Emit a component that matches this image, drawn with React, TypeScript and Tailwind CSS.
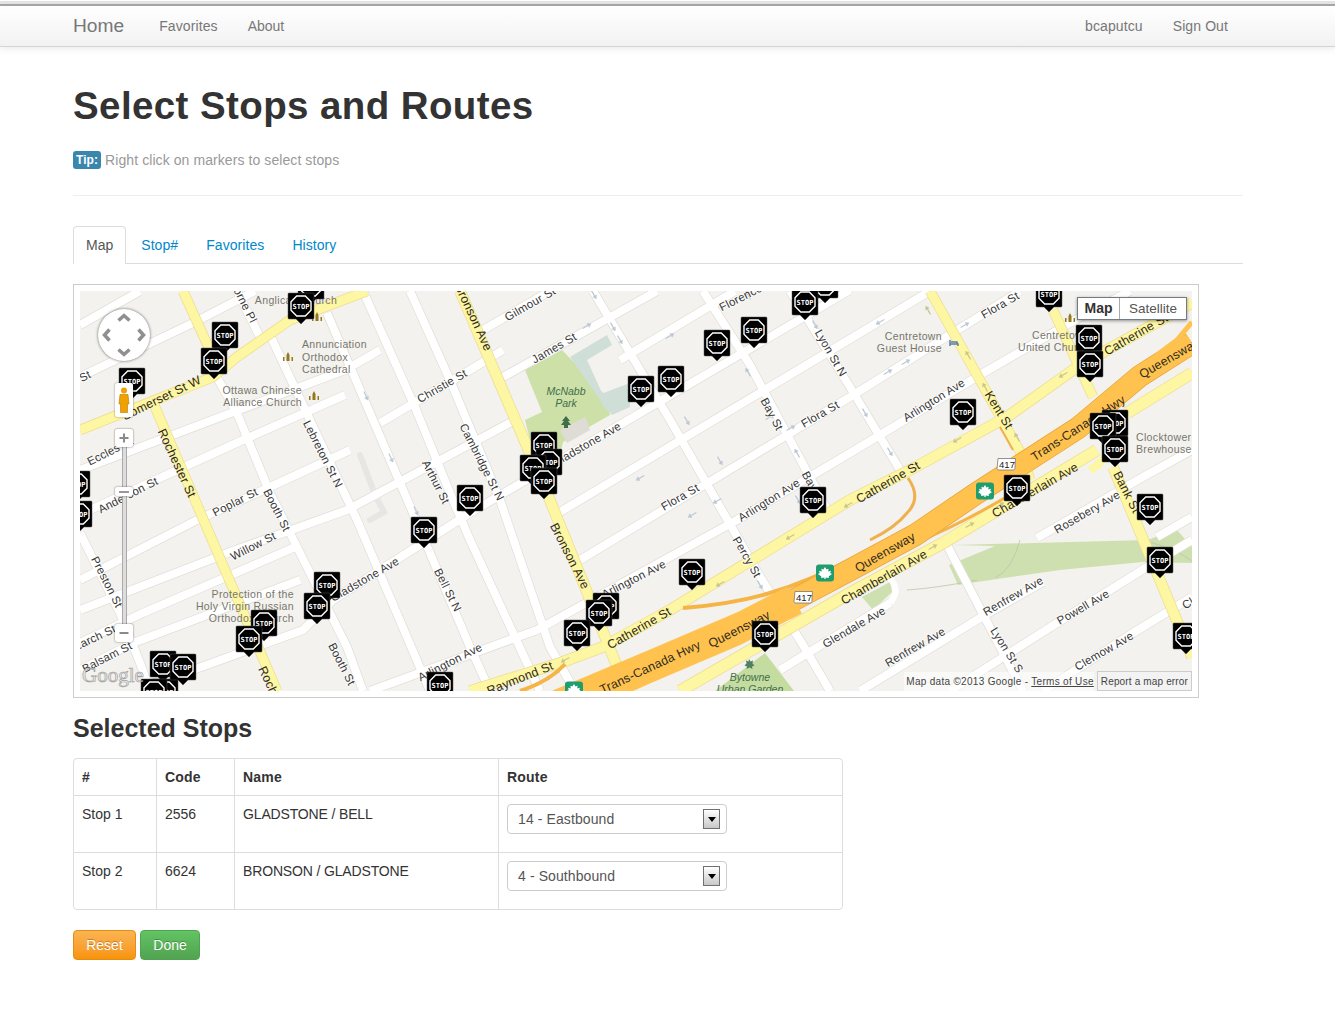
type Pt = [number, number];
type Label = { t: string; x: number; y: number; a?: number; anchor?: "start" | "middle" | "end"; main?: boolean };

const whiteRoads: Pt[][] = [
  // north-east running streets
  [[80, 325], [140, 291]],
  [[80, 377], [195, 322], [255, 291]],
  [[80, 470], [345, 370], [380, 350]],
  [[90, 510], [243, 440], [345, 395]],
  [[380, 423], [470, 370], [503, 350]],
  [[483, 330], [550, 291]],
  [[503, 377], [657, 291]],
  [[620, 360], [735, 291]],
  [[333, 600], [470, 513], [560, 460], [850, 290]],
  [[193, 670], [303, 630], [333, 600]],
  [[560, 512], [850, 339], [930, 291]],
  [[580, 560], [850, 397], [1020, 291]],
  [[370, 691], [537, 630], [737, 520], [850, 453], [985, 372], [1075, 320], [1130, 291]],
  [[80, 580], [197, 520], [257, 493], [350, 450]],
  [[80, 610], [230, 552], [347, 510], [515, 420]],
  [[80, 643], [143, 613], [300, 545]],
  [[80, 670], [133, 643], [300, 580]],
  [[1037, 538], [1143, 477], [1192, 450]],
  [[1157, 537], [1192, 517]],
  [[780, 670], [890, 603]],
  [[860, 691], [985, 615], [1043, 582]],
  [[950, 691], [1057, 623], [1147, 567], [1192, 540]],
  [[1043, 691], [1133, 633], [1192, 597]],
  // south-east running streets
  [[237, 291], [260, 337]],
  [[270, 335], [357, 520], [430, 691]],
  [[210, 365], [237, 413], [270, 493], [310, 573], [347, 647], [363, 691]],
  [[80, 533], [120, 613], [140, 663], [150, 691]],
  [[327, 313], [413, 513], [470, 647], [490, 691]],
  [[363, 291], [415, 407], [450, 493], [470, 540], [540, 691]],
  [[410, 291], [450, 380], [500, 500], [550, 647], [575, 691]],
  [[593, 291], [670, 420], [762, 580], [800, 640], [830, 691]],
  [[703, 291], [750, 365], [797, 453], [830, 515]],
  [[790, 291], [850, 387], [900, 470]],
  [[947, 545], [1023, 691]],
];

const yellowRoads: { pts: Pt[]; w: number }[] = [
  { pts: [[80, 430], [213, 377], [237, 357], [290, 320], [367, 291]], w: 9 },
  { pts: [[183, 291], [213, 357]], w: 9 },
  { pts: [[152, 400], [277, 691]], w: 9 },
  { pts: [[460, 291], [547, 493], [627, 691]], w: 10 },
  { pts: [[470, 691], [560, 663], [603, 647], [670, 610], [850, 500], [910, 470], [1007, 417], [1073, 370], [1107, 350], [1192, 303]], w: 10 },
  { pts: [[680, 691], [850, 593], [943, 543], [1097, 450]], w: 11 },
  { pts: [[1127, 413], [1192, 373]], w: 11 },
  { pts: [[930, 291], [1023, 457], [1030, 480]], w: 9 },
  { pts: [[1053, 310], [1093, 397]], w: 9 },
  { pts: [[1113, 467], [1192, 657]], w: 10 },
];

const highway = "575,702 650,667 739,629 850,570 915,535 977,493 1078,428 1140,376 1192,343";

const labels: Label[] = [
  { t: "Somerset St W", x: 200, y: 379, a: -26, anchor: "end", main: true },
  { t: "Rochester St", x: 177, y: 463, a: 65, main: true },
  { t: "Rochester St", x: 262, y: 667, a: 65, anchor: "start", main: true },
  { t: "Lorne Pl", x: 254, y: 322, a: 63, anchor: "end" },
  { t: "Lebreton St N", x: 323, y: 454, a: 63 },
  { t: "Christie St", x: 442, y: 386, a: -30 },
  { t: "Arthur St", x: 436, y: 482, a: 63 },
  { t: "Cambridge St N", x: 482, y: 462, a: 63 },
  { t: "Eccles St", x: 110, y: 451, a: -27 },
  { t: "Anderson St", x: 128, y: 495, a: -27 },
  { t: "Poplar St", x: 235, y: 502, a: -27 },
  { t: "Booth St", x: 277, y: 510, a: 63 },
  { t: "Willow St", x: 253, y: 546, a: -27 },
  { t: "Preston St", x: 107, y: 582, a: 63 },
  { t: "Gladstone Ave", x: 398, y: 560, a: -30, anchor: "end" },
  { t: "Bell St N", x: 448, y: 590, a: 63 },
  { t: "Larch St", x: 115, y: 628, a: -25, anchor: "end" },
  { t: "Balsam St", x: 107, y: 657, a: -27 },
  { t: "Booth St", x: 342, y: 664, a: 63 },
  { t: "Arlington Ave", x: 450, y: 662, a: -27 },
  { t: "St", x: 85, y: 376, a: -27 },
  { t: "Gilmour St", x: 530, y: 304, a: -30 },
  { t: "Bronson Ave", x: 489, y: 350, a: 65, anchor: "end", main: true },
  { t: "James St", x: 554, y: 348, a: -30 },
  { t: "Gladstone Ave", x: 620, y: 425, a: -30, anchor: "end" },
  { t: "Florence St", x: 720, y: 308, a: -27, anchor: "start" },
  { t: "Lyon St N", x: 831, y: 353, a: 60 },
  { t: "Bay St", x: 772, y: 414, a: 62 },
  { t: "Flora St", x: 820, y: 414, a: -30 },
  { t: "Flora St", x: 680, y: 497, a: -30 },
  { t: "Arlington Ave", x: 769, y: 500, a: -32 },
  { t: "Bay St", x: 805, y: 472, a: 62, anchor: "start" },
  { t: "Percy St", x: 747, y: 557, a: 60 },
  { t: "Bronson Ave", x: 570, y: 556, a: 63, main: true },
  { t: "Arlington Ave", x: 665, y: 563, a: -27, anchor: "end" },
  { t: "Catherine St", x: 639, y: 628, a: -30, main: true },
  { t: "Raymond St", x: 520, y: 678, a: -22, main: true },
  { t: "Trans-Canada Hwy", x: 650, y: 667, a: -25, main: true },
  { t: "Queensway", x: 739, y: 629, a: -27, main: true },
  { t: "Glendale Ave", x: 854, y: 627, a: -30 },
  { t: "Flora St", x: 1000, y: 305, a: -30 },
  { t: "Catherine St", x: 1105, y: 352, a: -30, anchor: "start", main: true },
  { t: "Queensway", x: 1140, y: 375, a: -30, anchor: "start", main: true },
  { t: "Arlington Ave", x: 934, y: 400, a: -32 },
  { t: "Kent St", x: 999, y: 410, a: 58, main: true },
  { t: "Trans-Canada Hwy", x: 1078, y: 428, a: -33, main: true },
  { t: "Chamberlain Ave", x: 1035, y: 490, a: -30, main: true },
  { t: "Catherine St", x: 888, y: 482, a: -30, main: true },
  { t: "Queensway", x: 885, y: 552, a: -30, main: true },
  { t: "Chamberlain Ave", x: 884, y: 577, a: -30, main: true },
  { t: "Rosebery Ave", x: 1087, y: 512, a: -30 },
  { t: "Bank St", x: 1127, y: 492, a: 63, main: true },
  { t: "Renfrew Ave", x: 1013, y: 596, a: -30 },
  { t: "Powell Ave", x: 1083, y: 607, a: -30 },
  { t: "Renfrew Ave", x: 915, y: 647, a: -30 },
  { t: "Lyon St S", x: 1007, y: 650, a: 58 },
  { t: "Clemow Ave", x: 1104, y: 651, a: -30 },
  { t: "Clemow Ave", x: 1183, y: 606, a: -30, anchor: "start" },
];

const pois: { t: string; x: number; y: number; anchor: "start" | "middle" | "end" }[] = [
  { t: "Anglican Church", x: 296, y: 304, anchor: "middle" },
  { t: "Annunciation", x: 302, y: 348, anchor: "start" },
  { t: "Orthodox", x: 302, y: 361, anchor: "start" },
  { t: "Cathedral", x: 302, y: 373, anchor: "start" },
  { t: "Ottawa Chinese", x: 302, y: 394, anchor: "end" },
  { t: "Alliance Church", x: 302, y: 406, anchor: "end" },
  { t: "Protection of the", x: 294, y: 598, anchor: "end" },
  { t: "Holy Virgin Russian", x: 294, y: 610, anchor: "end" },
  { t: "Orthodox Church", x: 294, y: 622, anchor: "end" },
  { t: "Centretown", x: 942, y: 340, anchor: "end" },
  { t: "Guest House", x: 942, y: 352, anchor: "end" },
  { t: "Centretown", x: 1032, y: 339, anchor: "start" },
  { t: "United Church", x: 1018, y: 351, anchor: "start" },
  { t: "Clocktower", x: 1136, y: 441, anchor: "start" },
  { t: "Brewhouse", x: 1136, y: 453, anchor: "start" },
];

const stops: Pt[] = [
  [311, 286], [301, 306], [225, 335], [214, 361], [132, 381], [77, 484], [79, 514],
  [327, 585], [317, 606], [264, 623], [249, 639], [165, 692], [163, 664], [183, 667], [154, 692],
  [424, 530], [470, 498], [440, 685], [544, 445], [549, 462], [533, 468], [544, 481],
  [641, 389], [671, 379], [717, 343], [754, 330], [825, 285], [805, 302], [692, 572], [813, 500],
  [606, 606], [599, 613], [577, 633], [765, 634], [963, 412], [1017, 488], [1049, 294], [1089, 338],
  [1090, 364], [1115, 423], [1103, 426], [1115, 449], [1150, 507], [1160, 560], [1186, 636],
];

const arrows: { x: number; y: number; a: number; c?: string }[] = [
  { x: 366, y: 396, a: 65 }, { x: 391, y: 458, a: 65 }, { x: 416, y: 511, a: 65 },
  { x: 594, y: 295, a: 60 }, { x: 613, y: 327, a: 60 }, { x: 620, y: 340, a: 60 },
  { x: 587, y: 326, a: -30 }, { x: 670, y: 336, a: -30 }, { x: 687, y: 421, a: 60 },
  { x: 720, y: 461, a: 60 }, { x: 692, y: 515, a: 150 }, { x: 717, y: 501, a: 150 },
  { x: 640, y: 478, a: 150 }, { x: 770, y: 417, a: -30 }, { x: 791, y: 428, a: -30 },
  { x: 748, y: 295, a: 240 }, { x: 748, y: 372, a: 240 }, { x: 797, y: 453, a: 240 },
  { x: 798, y: 500, a: 60 }, { x: 760, y: 585, a: 60 }, { x: 880, y: 322, a: 150 },
  { x: 888, y: 372, a: -30 }, { x: 906, y: 362, a: -30 }, { x: 965, y: 325, a: -30 },
  { x: 815, y: 325, a: 60 }, { x: 865, y: 413, a: 60 }, { x: 890, y: 452, a: 60 },
  { x: 928, y: 310, a: 240, c: "#c9c68f" }, { x: 968, y: 355, a: 240, c: "#c9c68f" },
  { x: 985, y: 387, a: 240, c: "#c9c68f" }, { x: 1017, y: 437, a: 240, c: "#c9c68f" },
  { x: 957, y: 440, a: 150, c: "#c9c68f" }, { x: 1063, y: 375, a: 150, c: "#c9c68f" },
  { x: 848, y: 505, a: 150, c: "#c9c68f" }, { x: 790, y: 537, a: 150, c: "#c9c68f" },
  { x: 720, y: 584, a: 150, c: "#c9c68f" }, { x: 565, y: 660, a: 150, c: "#c9c68f" },
  { x: 933, y: 547, a: -30, c: "#c9c68f" }, { x: 970, y: 525, a: -30, c: "#c9c68f" },
  { x: 1000, y: 505, a: -30, c: "#c9c68f" },
];

const line = (pts: Pt[]) => pts.map((p) => p.join(",")).join(" ");

const StopMarker = ({ x, y }: { x: number; y: number }) => (
  <g transform={`translate(${x} ${y})`}>
    <path d="M-12-13h24a1 1 0 0 1 1 1v24a1 1 0 0 1-1 1h-7l-5 5-5-5h-7a1 1 0 0 1-1-1v-24a1 1 0 0 1 1-1z" fill="#000" stroke="#555" strokeWidth="0.5" />
    <path d="M-4.300-10h8.600L10-4.300v8.600L4.300 10h-8.600L-10 4.300v-8.600z" fill="none" stroke="#fff" strokeWidth="1.400" />
    <text y="2.500" textAnchor="middle" fontFamily="'DejaVu Sans Mono',monospace" fontSize="7" fontWeight="700" fill="#fff">
      STOP
    </text>
  </g>
);

const Church = ({ x, y }: { x: number; y: number }) => (
  <path transform={`translate(${x} ${y})`} d="M-5 4v-4h1.500v4zM-1.500 4v-6L0-5l1.500 3v6zM3.500 4v-4H5v4z" fill="#94781c" />
);

const Shield = ({ x, y }: { x: number; y: number }) => (
  <g transform={`translate(${x} ${y})`}>
    <rect x="-9" y="-8.500" width="18" height="17" rx="3" fill="#1f9d6e" />
    <path d="M0-6l1.600 2.600 2-.8-.4 2.600 2.800-.6-.8 2.200L7 1 3.600 3.600 4 5 .6 4.400V6h-1.200V4.400L-4 5l.4-1.400L-7 1l1.800-.999-.8-2.200 2.800.6-.4-2.600 2 .8z" fill="#fff" />
  </g>
);

const HwyShield = ({ x, y }: { x: number; y: number }) => (
  <g transform={`translate(${x} ${y})`}>
    <path d="M-9-5.500h17.500l-.6 10q-.2 1.500-1.700 1.500H-8.500q-1.500 0-1.500-1.500z" fill="#fff" stroke="#777" strokeWidth="0.8" />
    <text y="3.600" textAnchor="middle" fontSize="9.500" fill="#222">417</text>
  </g>
);

const OneWay = ({ x, y, a, c }: { x: number; y: number; a: number; c?: string }) => (
  <path transform={`translate(${x} ${y}) rotate(${a})`} d="M-5-.6h6v-1.900L5 0 1 2.500V.6h-6z" fill={c ?? "#bcc8d4"} />
);

const MapSketch = () => (
  <svg viewBox="80 291 1112 400" className="block h-[400px] w-[1112px] font-['Liberation_Sans',Arial,sans-serif]">
    <rect x="80" y="291" width="1112" height="400" fill="#f3f2ee" />
    {/* parks */}
    <path d="M525 370l37-20 41 43 7 22-47 27-3 13-30-15-5-20 17-8z" fill="#cde0a8" />
    <path d="M570 357l37-22 5 10-25 15 16 35-5 2zM598 395l32-12v24l-18 8-10-10z" fill="#cfdfd8" />
    <path d="M560 430l25-13 5 13-23 13z" fill="#dedcd4" />
    <path d="M953 545l194-5 30-10 15 17v16l-49-1-83 8-83 12-19 3-9-20 46-19z" fill="#cfe0b0" />
    <path d="M862 597l28-15 2 10-19 18z" fill="#cfe0b0" />
    <path d="M715 691l50-38 29 38z" fill="#c5dca0" />
    <path d="M572 691l4-8 8 0 4 8z" fill="#cfe0b0" />
    <path d="M977 580q-40 8-70 10M1020 540q-8 30-25 38M1146 541q30 8 46 20" fill="none" stroke="#b9c8a4" strokeWidth="0.8" />
    {/* white streets */}
    {whiteRoads.map((pts, i) => (
      <polyline key={i} points={line(pts)} fill="none" stroke="#e2dfd8" strokeWidth="9.500" />
    ))}
    <path d="M360 455l15 40 9 17-14 8" fill="none" stroke="#e7e6e4" strokeWidth="6" strokeLinecap="round" />
    <path d="M890 603q10-12 2-22l-8-10" fill="none" stroke="#fff" strokeWidth="6" />
    {whiteRoads.map((pts, i) => (
      <polyline key={i} points={line(pts)} fill="none" stroke="#fff" strokeWidth="8" />
    ))}
    {/* arterial roads */}
    {yellowRoads.map((r, i) => (
      <polyline key={i} points={line(r.pts)} fill="none" stroke="#eedd92" strokeWidth={r.w + 1.500} />
    ))}
    {yellowRoads.map((r, i) => (
      <polyline key={i} points={line(r.pts)} fill="none" stroke="#fdf6a3" strokeWidth={r.w} />
    ))}
    {/* highway and ramps */}
    <path d="M683 608q50-4 87-15t80-33" fill="none" stroke="#f5b445" strokeWidth="4" />
    <path d="M520 691q30-10 45-27" fill="none" stroke="#f5b445" strokeWidth="4" />
    <path d="M908 478q14 20-1 35-12 15-37 27" fill="none" stroke="#f0b04e" strokeWidth="3" />
    <path d="M910 545q50-20 103-52" fill="none" stroke="#f5b445" strokeWidth="3" />
    <path d="M1000 427l13 23" fill="none" stroke="#f0b04e" strokeWidth="2" />
    <path d="M1090 470q18-10 20-28" fill="none" stroke="#fdf6a3" strokeWidth="8" />
    <polyline points={highway} fill="none" stroke="#e8a53a" strokeWidth="22.500" />
    <polyline points="555,696 650,656 739,618 790,592" fill="none" stroke="#ffc24f" strokeWidth="12" />
    <polyline points="610,697 650,679 739,641 800,610" fill="none" stroke="#ffc24f" strokeWidth="8" />
    <polyline points={highway} fill="none" stroke="#ffc24f" strokeWidth="21" />
    <path d="M1192 322l-15 18-20 15" fill="none" stroke="#ffc24f" strokeWidth="5" />
    {arrows.map((a, i) => (
      <OneWay key={i} {...a} />
    ))}
    {labels.map((l, i) => (
      <text
        key={i}
        x={l.x}
        y={l.y}
        dy="0.35em"
        textAnchor={l.anchor ?? "middle"}
        transform={`rotate(${l.a ?? 0} ${l.x} ${l.y})`}
        fontSize={l.main ? 12.4 : 11.5}
        fill={l.main ? "#2e2a1c" : "#383838"}
        stroke={l.main ? "none" : "#fff"}
        strokeWidth="2"
        strokeOpacity="0.7"
        paintOrder="stroke"
        letterSpacing="0.2"
      >
        {l.t}
      </text>
    ))}
    {pois.map((p, i) => (
      <text key={i} x={p.x} y={p.y} textAnchor={p.anchor} fontSize="10.500" fill="#77766c" letterSpacing="0.35">
        {p.t}
      </text>
    ))}
    <text x="566" y="395" textAnchor="middle" fontSize="10.500" fontStyle="italic" fill="#3f6e4a">McNabb</text>
    <text x="566" y="407" textAnchor="middle" fontSize="10.500" fontStyle="italic" fill="#3f6e4a">Park</text>
    <text x="750" y="681" textAnchor="middle" fontSize="10.500" fontStyle="italic" fill="#3f6e4a">Bytowne</text>
    <text x="750" y="693" textAnchor="middle" fontSize="10.500" fontStyle="italic" fill="#3f6e4a">Urban Garden</text>
    <path d="M566 416l4 5h-2l3 4h-3v3h-4v-3h-3l3-4h-2z" fill="#3f6e4a" />
    <path d="M749 659l1.500 2.500 2.500-1-.5 3 2 2-2.500 1 .5 2.500-3-1.500-3 1.500.5-2.500-2.500-1 2-2-.5-3 2.500 1z" fill="#4f8060" />
    <Church x={288} y={357} />
    <Church x={317} y={317} />
    <Church x={314} y={396} />
    <Church x={1070} y={318} />
    <path d="M950 340v6M950 344h8v2M951 342h6v2" fill="none" stroke="#5d7ea8" strokeWidth="1.500" />
    <Shield x={985} y={491} />
    <Shield x={825} y={573} />
    <Shield x={574} y={690} />
    <HwyShield x={1007} y={464} />
    <HwyShield x={804} y={597} />
    {stops.map(([x, y], i) => (
      <StopMarker key={i} x={x} y={y} />
    ))}
    <text x="82" y="682" fontFamily="'Liberation Serif',serif" fontSize="21" fill="#ececec" stroke="#9a9a9a" strokeWidth="0.7" opacity="0.9">
      Google
    </text>
  </svg>
);

const ControlButton = ({ sign, className }: { sign: "+" | "-"; className: string }) => (
  <div className={`absolute left-[35px] flex h-[18px] w-[18px] items-center justify-center rounded-[2px] bg-white shadow-[0_0_2px_rgba(0,0,0,0.6)] ${className}`}>
    <svg width="12" height="12" viewBox="0 0 12 12">
      <path d={sign === "+" ? "M6 1.500v9M1.500 6h9" : "M1.500 6h9"} stroke="#8a8a8a" strokeWidth="2" />
    </svg>
  </div>
);

const MapPanel = () => (
  <div className="relative h-[414px] w-[1126px] border border-[#ccc] p-[6px]">
    <div className="relative h-[400px] w-[1112px] overflow-hidden text-[#333]">
      <MapSketch />
      {/* pan */}
      <div className="absolute left-[18px] top-[18px] h-[52px] w-[52px] rounded-full bg-white shadow-[0_0_3px_rgba(0,0,0,0.6)]">
        <svg width="52" height="52" viewBox="0 0 52 52">
          <path d="M20.500 11.500l5.500-5 5.500 5M20.500 40.500l5.500 5 5.500-5M11.500 20.500l-5 5.500 5 5.500M40.500 20.500l5 5.500-5 5.500" fill="none" stroke="#8f8f8f" strokeWidth="3.500" />
        </svg>
      </div>
      {/* pegman */}
      <div className="absolute left-[35px] top-[92px] flex h-[34px] w-[18px] items-center justify-center rounded-[2px] bg-white shadow-[0_0_2px_rgba(0,0,0,0.5)]">
        <svg width="12" height="26" viewBox="0 0 12 26">
          <circle cx="6" cy="3.500" r="3" fill="#f0a000" />
          <path d="M2 7.500h8l1 9.500H9.500v8.500h-7V17H1z" fill="#f0a000" stroke="#b87800" strokeWidth="0.6" />
        </svg>
      </div>
      {/* zoom */}
      <div className="absolute left-[42px] top-[155px] h-[180px] w-[5px] border-x border-[#aaa] bg-[#ddd]" />
      <ControlButton sign="+" className="top-[138px]" />
      <div className="absolute left-[35px] top-[196px] flex h-[9px] w-[18px] items-center justify-center rounded-[2px] bg-white shadow-[0_0_2px_rgba(0,0,0,0.6)]">
        <div className="h-[2px] w-[10px] bg-[#999]" />
      </div>
      <ControlButton sign="-" className="top-[333px]" />
      {/* map type */}
      <div className="absolute left-[997px] top-[6px] flex h-[23px] w-[110px] border border-[#717b87] bg-white text-[14px] leading-[21px] shadow-[0_1px_3px_rgba(0,0,0,0.4)]">
        <div className="w-[42px] border-r border-[#aaa] text-center font-bold text-[#333]">Map</div>
        <div className="flex-1 text-center text-[13.5px] text-[#555]">Satellite</div>
      </div>
      {/* attribution */}
      <div className="absolute bottom-0 right-0 flex items-end text-[10px] tracking-[0.3px] text-[#444]">
        <div className="mr-[3px] h-[19px] bg-white/50 pl-[2px] leading-[19px]">
          Map data ©2013 Google - <span className="underline">Terms of Use</span>
        </div>
        <div className="h-[20px] border border-[#ccc] bg-[#f3f3f3] px-[3px] leading-[19px] tracking-[0.15px]">Report a map error</div>
      </div>
    </div>
  </div>
);

const RouteSelect = ({ value }: { value: string }) => (
  <div className="flex h-[30px] w-[220px] items-center justify-between rounded-[4px] border border-[#ccc] bg-white pl-[10px] pr-[6px] text-[14px] tracking-[0.1px] text-[#555]">
    <span>{value}</span>
    <span className="flex h-[20px] w-[17px] items-center justify-center border border-[#707070] bg-gradient-to-b from-white to-[#c8c8c8]">
      <span className="h-0 w-0 border-x-[4px] border-t-[5px] border-x-transparent border-t-black" />
    </span>
  </div>
);

const rows = [
  { stop: "Stop 1", code: "2556", name: "GLADSTONE / BELL", route: "14 - Eastbound" },
  { stop: "Stop 2", code: "6624", name: "BRONSON / GLADSTONE", route: "4 - Southbound" },
];

export default function App() {
  return (
    <div className="min-h-screen bg-white font-['Liberation_Sans',Arial,sans-serif] text-[14px] text-[#333]">
      <div className="h-[6px] border-b-2 border-t border-b-[#aaa] border-t-white bg-[#e6e6e6]" />
      <nav className="h-[41px] border-b border-[#d4d4d4] bg-gradient-to-b from-white to-[#f2f2f2] shadow-[0_1px_8px_rgba(0,0,0,0.1)]">
        <div className="ml-[73px] flex h-[40px] w-[1155px] items-center text-[#777]">
          <span className="mr-[35px] text-[19.2px]">Home</span>
          <span className="mr-[30px] tracking-[0.1px]">Favorites</span>
          <span>About</span>
          <span className="ml-auto mr-[30px] tracking-[0.1px]">bcaputcu</span>
          <span className="tracking-[0.1px]">Sign Out</span>
        </div>
      </nav>

      <main className="ml-[73px] w-[1170px]">
        <h1 className="pt-[36px] text-[38.5px] font-bold leading-[46px] tracking-[0.4px]">Select Stops and Routes</h1>
        <p className="mt-[21px] flex h-[20px] items-center tracking-[0.08px] text-[#999]">
          <span className="mr-[4px] flex h-[18px] items-center rounded-[3px] bg-[#3a87ad] px-[3px] text-[12px] font-bold text-white">Tip:</span>
          Right click on markers to select stops
        </p>
        <hr className="mt-[25px] border-[#eee]" />

        <div className="mt-[30px] flex h-[38px] border-b border-[#ddd]">
          <div className="flex h-[38px] items-center rounded-t-[4px] border-x border-t border-[#ddd] bg-white px-[12px] text-[#555]">Map</div>
          <div className="flex items-center gap-[28px] pl-[15px] pt-[2px] tracking-[0.07px] text-[#0088cc]">
            <span>Stop#</span>
            <span>Favorites</span>
            <span>History</span>
          </div>
        </div>

        <div className="mt-[20px]">
          <MapPanel />
        </div>

        <h3 className="mt-[15px] text-[25px] font-bold leading-[30px]">Selected Stops</h3>

        <table className="mt-[15px] w-[770px] table-fixed border-separate border-spacing-0 rounded-[4px] border border-[#ddd]">
          <thead>
            <tr className="h-[36px] text-left tracking-[0.2px]">
              <th className="w-[82px] px-[8px] font-bold">#</th>
              <th className="w-[78px] border-l border-[#ddd] px-[8px] font-bold">Code</th>
              <th className="w-[264px] border-l border-[#ddd] px-[8px] font-bold">Name</th>
              <th className="border-l border-[#ddd] px-[8px] font-bold">Route</th>
            </tr>
          </thead>
          <tbody>
            {rows.map((r) => (
              <tr key={r.code} className="h-[57px] align-top">
                <td className="border-t border-[#ddd] px-[8px] pt-[8px] leading-[20px]">{r.stop}</td>
                <td className="border-l border-t border-[#ddd] px-[8px] pt-[8px] leading-[20px]">{r.code}</td>
                <td className="border-l border-t border-[#ddd] px-[8px] pt-[8px] leading-[20px] tracking-[-0.15px]">{r.name}</td>
                <td className="border-l border-t border-[#ddd] px-[8px] pt-[8px]">
                  <RouteSelect value={r.route} />
                </td>
              </tr>
            ))}
          </tbody>
        </table>

        <div className="mt-[20px] flex gap-[4px] text-white">
          <button className="h-[30px] w-[63px] rounded-[4px] border border-[#e38d13] bg-gradient-to-b from-[#fbb450] to-[#f89406] [text-shadow:0_-1px_0_rgba(0,0,0,0.25)]">Reset</button>
          <button className="h-[30px] w-[60px] rounded-[4px] border border-[#51a351] bg-gradient-to-b from-[#62c462] to-[#51a351] [text-shadow:0_-1px_0_rgba(0,0,0,0.25)]">Done</button>
        </div>
      </main>
    </div>
  );
}
